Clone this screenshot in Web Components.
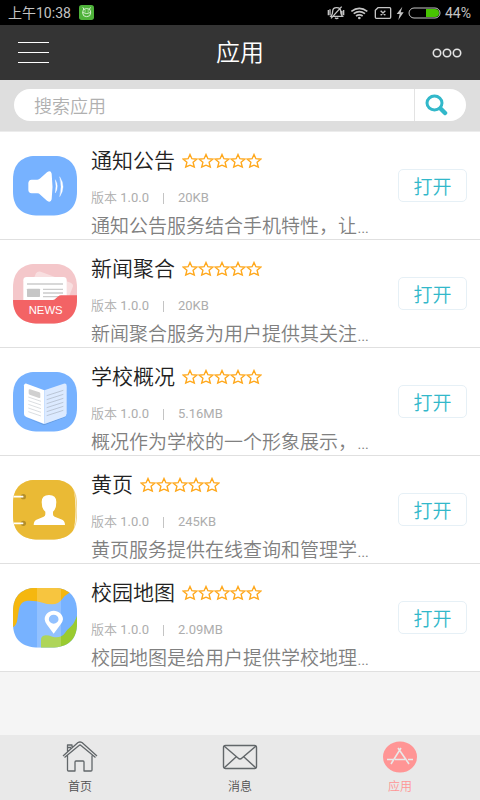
<!DOCTYPE html>
<html lang="zh-CN">
<head>
<meta charset="utf-8">
<meta name="viewport" content="width=device-width, initial-scale=1">
<title>应用</title>
<style>
body {
    --accent: #32b8ca;
    --active: #ff9595;
    --line: #e0e0e0;
    margin: 0;
    min-height: 100vh;
    display: flex;
    flex-direction: column;
    background: #f5f5f5;
    font-family: Roboto, "Noto Sans CJK SC", sans-serif;
    font-weight: 350;
}
main {
    flex: 1;
}
</style>
</head>
<body>

<status-bar time="上午10:38" battery="44%"></status-bar>
<app-header>应用</app-header>
<search-box placeholder="搜索应用"></search-box>

<main>
    <app-item name="通知公告" version="1.0.0" size="20KB">
        <svg slot="icon" viewBox="0 0 192 180" aria-hidden="true">
            <path fill="#77b2ff" d="M0 0h192v180H0z"/>
            <path fill="#fff" d="M46 82q0-10 10-11h17q5 0 9-4l20-18q11-8 14 4 5 38 0 77-3 12-14 4l-20-18q-4-4-9-4H56q-10-1-10-11z"/>
            <path fill="#fff" d="M127 71q12 20 0 40 4-20 0-40zM140 62q20 30 0 60 8-30 0-60z" stroke="#fff" stroke-width="1"/>
        </svg>
        通知公告服务结合手机特性，让…
    </app-item>
    <app-item name="新闻聚合" version="1.0.0" size="20KB">
        <svg slot="icon" viewBox="0 0 192 180" aria-hidden="true">
            <path fill="#f4c7ca" d="M0 0h192v180H0z"/>
            <path fill="#f8dfe0" d="M62 44l7-16q5-8 14-5l90 33q10 5 6 14l-19 48H90z"/>
            <path fill="#fff" d="M31 110V49q0-10 10-10h110q10 0 10 10v61z"/>
            <path stroke="#ccc" stroke-width="4" d="M42 60h108M90 76h60M90 87h60M90 98h50"/>
            <rect x="42" y="74" width="39" height="25" rx="2" fill="#c6c6c6"/>
            <path fill="#f36365" d="M0 108h120q5 0 9-5l7-6q3-3 8-3h48v86H0z"/>
            <text x="47" y="150" fill="#fff" font-family="Liberation Sans, sans-serif" font-size="34">NEWS</text>
        </svg>
        新闻聚合服务为用户提供其关注…
    </app-item>
    <app-item name="学校概况" version="1.0.0" size="5.16MB">
        <svg slot="icon" viewBox="0 0 192 180" aria-hidden="true">
            <path fill="#77b2ff" d="M0 0h192v180H0z"/>
            <path fill="#659bdf" d="M35 136l58 21 65-24-2 3-63 24z"/>
            <path fill="#fff" d="M33 40q1-7 8-5l53 20v101l-54-21q-7-3-7-9z"/>
            <path fill="#dceaff" d="M94 55l58-20q9-2 9 7v82q0 8-8 11l-59 21z"/>
            <path fill="#d0d0d0" d="M47 54q0-3 4-2l28 9q3 1 3 4v11q0 3-4 2l-28-10q-3-1-3-4z"/>
            <path fill="none" stroke="#c9cdd2" stroke-width="2" d="M46 75l38 13M46 86l38 13M46 97l38 13M46 108l38 13M46 119l38 13"/>
            <path fill="none" stroke="#a9b3c1" stroke-width="2" d="M101 71l50-16M101 83l50-16M101 95l50-16M101 107l50-16M101 119l50-16M101 131l50-16"/>
        </svg>
        概况作为学校的一个形象展示，…
    </app-item>
    <app-item name="黄页" version="1.0.0" size="245KB">
        <svg slot="icon" viewBox="0 0 192 180" aria-hidden="true">
            <path fill="#f0d48a" d="M0 0h192v180H0z"/>
            <path fill="none" stroke="#fff" stroke-width="2" d="M150 3q38 8 39 87t-39 87"/>
            <path fill="#eaba35" d="M0 0h140q32 4 41 28 6 20 6 62t-6 62q-9 24-41 28H0z"/>
            <circle cx="31" cy="50" r="8" fill="#b48e28"/>
            <circle cx="31" cy="130" r="8" fill="#b48e28"/>
            <path stroke="#fff" stroke-width="5" stroke-linecap="round" d="M0 50h29M0 130h29"/>
            <path fill="#fff" d="M86 66q0-21 22-21t22 21q0 21-10 29v8q0 5 5 7l19 8q12 4 12 17H62q0-13 12-17l18-8q5-2 5-7v-8q-11-8-11-29z"/>
        </svg>
        黄页服务提供在线查询和管理学…
    </app-item>
    <app-item name="校园地图" version="1.0.0" size="2.09MB">
        <svg slot="icon" viewBox="0 0 192 180" aria-hidden="true">
            <path fill="#77b2ff" d="M0 0h192v180H0z"/>
            <path fill="#f5b70f" d="M0 0h192q-8 4-23 14-13 7-22 20-10 15-30 15-16 0-28-5-18-7-46-6-20 1-25 25-3 18-5 32-2 16-13 23z"/>
            <path fill="#9acb30" d="M84 180v-22q-1-15 14-16 10 0 20 4 24 7 38-11 8-12 16-18 12-10 20-34v97z"/>
            <path fill="#fff" fill-opacity=".2" d="M72 0h72v180H72z"/>
            <path fill="#fff" fill-rule="evenodd" d="M122 137l-20-27q-7-10-7-16c0-15 12-26 27-26s28 11 28 26q0 6-8 16zM122 80a14 13 0 1 0 0 27 14 13 0 1 0 0-27z"/>
        </svg>
        校园地图是给用户提供学校地理…
    </app-item>
</main>

<tab-bar>
    <tab-item label="首页">
        <svg width="36" height="32" viewBox="0 0 36 32" fill="none" stroke="#62676a" stroke-width="1.300" stroke-linejoin="round" aria-hidden="true">
            <path d="M1 15L16 1.500q2-1 4 0L35 15M2.500 16.500L17 4.500q1-1 2 0l14.500 12M5.500 14.500V29q0 1 1 1H13v-9q0-1 1-1h7q1 0 1 1v9h7q1 0 1-1V14.500M5.500 11V4h4.500v3M5.500 6.500H9"/>
        </svg>
    </tab-item>
    <tab-item label="消息">
        <svg width="36" height="32" viewBox="0 0 36 32" fill="none" stroke="#62676a" stroke-width="1.400" aria-hidden="true">
            <rect x="1.500" y="4.500" width="33" height="23" rx="2"/>
            <path d="M2 5l14 12q2 2 4 0L34 5M2 27l12-11M34 27L22 16"/>
        </svg>
    </tab-item>
    <tab-item label="应用" active>
        <svg width="36" height="32" viewBox="0 0 36 32" fill="none" stroke="#e9e9e9" stroke-width="1.600" aria-hidden="true">
            <ellipse cx="18" cy="16" rx="17" ry="15.500" fill="#ff9595" stroke="none"/>
            <path d="M5 18.500h6M13 18.500h10M26 18.500h5M9 23l10-16M16 7l11 16"/>
        </svg>
    </tab-item>
</tab-bar>

<script>
function makeTemplate(html) {
    const template = document.createElement('template');
    template.innerHTML = html;
    return template;
}

class BaseElement extends HTMLElement {
    constructor() {
        super();
        this.attachShadow({ mode: "open" });
        this.shadowRoot.appendChild(this.constructor.template.content.cloneNode(true));
    }

    // copies attribute values into the elements marked with data-text
    connectedCallback() {
        this.shadowRoot.querySelectorAll('[data-text]').forEach(el => {
            el.textContent = this.getAttribute(el.dataset.text);
        });
    }
}

class StatusBar extends BaseElement {
    static template = makeTemplate(`
<style>
:host {
    display: flex;
    align-items: center;
    justify-content: space-between;
    height: 25px;
    padding: 0 9px 0 8px;
    background: #000;
    color: #c4c4c4;
    font-size: 14px;
    font-weight: 400;
    line-height: 26px;
}
div {
    display: flex;
    align-items: center;
    gap: 8px;
}
.right {
    gap: 4px;
}
svg {
    display: block;
}
</style>

<div>
    <span data-text="time"></span>
    <svg width="15" height="15" viewBox="0 0 45 45">
        <rect width="45" height="45" rx="8" fill="#4eb23a"/>
        <g fill="none" stroke="#d5f0cf" stroke-width="3" stroke-linecap="round">
            <path d="M14 13q9-5 18 0 3 4 3 11 0 11-12 11T11 24q0-7 3-11zM12 8l3 5M34 8l-3 5M12 23q11 6 22 0M18 18h1M27 18h1"/>
        </g>
    </svg>
</div>
<div class="right">
    <svg width="77" height="18" viewBox="0 0 231 54" fill="none" stroke="#c4c4c4" stroke-width="4">
        <path d="M12 37q5-5 5-15 0-11 12-11t12 11q0 10 5 15zM24 41q5 5 10 0M44 8L12 43M4 18v16M9 16v18M50 18v16M45 20v15"/>
        <g stroke-width="5">
            <path d="M73 22q24-18 48 0M80 29q17-12 34 0M87 36q10-7 20 0"/>
        </g>
        <circle cx="97" cy="42" r="4" fill="#c4c4c4" stroke="none"/>
        <path d="M153 11h35q3 0 3 3v26q0 3-3 3h-40q-3 0-3-3V19zM161 20l14 14M175 20l-14 14"/>
        <path d="M226 8l-17 22h9l-4 18 16-23h-9z" fill="#c4c4c4" stroke="none"/>
    </svg>
    <svg width="33" height="12" viewBox="0 0 33 12">
        <rect x="1" y="1" width="31" height="10" rx="5" fill="none" stroke="#c4c4c4"/>
        <path d="M18 2h9q4 0 4 4t-4 4h-9z" fill="#47c400"/>
    </svg>
    <span data-text="battery"></span>
</div>`);
}
window.customElements.define('status-bar', StatusBar);

class AppHeader extends BaseElement {
    static template = makeTemplate(`
<style>
:host {
    display: grid;
    grid-template-columns: 1fr auto 1fr;
    align-items: center;
    height: 55px;
    padding: 0 18px;
    background: #343434;
    color: #fff;
}
h1 {
    margin: 0;
    font-size: 24px;
    font-weight: inherit;
    line-height: 34px;
}
button {
    display: flex;
    padding: 0;
    border: none;
    background: none;
}
.more {
    justify-self: end;
}
</style>

<button type="button" aria-label="菜单">
    <svg width="31" height="22" viewBox="0 0 31 22" stroke="#fff">
        <path d="M0 .5h31M0 10.500h31M0 20.500h31"/>
    </svg>
</button>
<h1><slot></slot></h1>
<button class="more" type="button" aria-label="更多">
    <svg width="30" height="10" viewBox="0 0 30 10" fill="none" stroke="#e4e4e4" stroke-width="1.600">
        <circle cx="5" cy="5" r="3.700"/>
        <circle cx="15" cy="5" r="3.700"/>
        <circle cx="25" cy="5" r="3.700"/>
    </svg>
</button>`);
}
window.customElements.define('app-header', AppHeader);

class SearchBox extends BaseElement {
    static template = makeTemplate(`
<style>
:host {
    display: block;
    padding: 9px 14px 10px;
    border-bottom: 1px solid #ececec;
    background: #dedede;
}
form {
    display: flex;
    height: 32px;
    overflow: hidden;
    border-radius: 16px;
    background: #fff;
}
input {
    flex: 1;
    min-width: 0;
    padding: 2px 20px 0;
    border: none;
    border-right: 1px solid #e3e3e3;
    outline: none;
    background: none;
    color: #333;
    font: inherit;
    font-size: 18px;
}
input::placeholder {
    color: #b0b0b0;
}
button {
    width: 51px;
    padding: 0 0 0 9px;
    border: none;
    background: none;
}
svg {
    display: block;
}
</style>

<form role="search">
    <input type="text" aria-label="搜索应用">
    <button type="button" aria-label="搜索">
        <svg width="24" height="22" viewBox="0 0 24 22" fill="none" stroke="#32b8ca">
            <ellipse cx="10.500" cy="9" rx="7.500" ry="7" stroke-width="3"/>
            <path stroke-width="4.500" stroke-linecap="round" d="M17 15l4 4"/>
        </svg>
    </button>
</form>`);

    connectedCallback() {
        this.shadowRoot.querySelector('input').placeholder = this.getAttribute('placeholder');
    }
}
window.customElements.define('search-box', SearchBox);

class StarRating extends BaseElement {
    static template = makeTemplate(`
<style>
:host {
    display: flex;
}
</style>`);

    connectedCallback() {
        const star = '<svg width="16" height="16" viewBox="0 0 16 16" fill="none" stroke="#ffa81c" stroke-width="1.400" aria-hidden="true"><path d="M8 1.500l1.900 4.200 4.900.5-3.700 3.100 1.200 4.700L8 12.200 3.700 14l1.200-4.700-3.700-3.100 4.900-.5z"/></svg>';
        this.shadowRoot.innerHTML += star.repeat(5);
    }
}
window.customElements.define('star-rating', StarRating);

class AppItem extends BaseElement {
    static template = makeTemplate(`
<style>
:host {
    display: flex;
    align-items: center;
    height: 107px;
    padding: 0 13px;
    border-bottom: 1px solid var(--line);
    background: #fff;
}
.icon {
    flex: none;
    width: 64px;
    height: 60px;
    margin-right: 14px;
    clip-path: path("M0 24C0 8 9 0 26 0H38C55 0 64 8 64 24V36C64 52 55 60 38 60H26C9 60 0 52 0 36Z");
}
::slotted(svg) {
    display: block;
    width: 64px;
    height: 60px;
}
.info {
    flex: 1;
    min-width: 0;
    padding-top: 15px;
}
.title {
    display: flex;
    align-items: center;
    gap: 7px;
}
h2 {
    margin: 0;
    color: #222;
    font-size: 21px;
    font-weight: inherit;
    line-height: 28px;
}
.meta {
    display: flex;
    align-items: center;
    gap: 14px;
    margin: 13px 0 7px;
    color: #adadad;
    font-size: 13px;
    line-height: 20px;
}
.meta [data-text] {
    font-weight: 400;
}
.meta i {
    width: 1px;
    height: 11px;
    background: #c4c4c4;
}
p {
    margin: 0;
    color: #808080;
    font-size: 19px;
    line-height: 24px;
    white-space: nowrap;
}
button {
    flex: none;
    width: 69px;
    height: 33px;
    padding: 0;
    border: 1px solid #e6f0f6;
    border-radius: 5px;
    background: #fff;
    color: var(--accent);
    font: inherit;
    font-size: 19px;
}
</style>

<div class="icon"><slot name="icon"></slot></div>
<div class="info">
    <div class="title">
        <h2 data-text="name"></h2>
        <star-rating></star-rating>
    </div>
    <div class="meta">
        <span>版本 <span data-text="version"></span></span>
        <i></i>
        <span data-text="size"></span>
    </div>
    <p><slot></slot></p>
</div>
<button type="button">打开</button>`);
}
window.customElements.define('app-item', AppItem);

class TabItem extends BaseElement {
    static template = makeTemplate(`
<style>
:host {
    flex: 1;
    color: #505050;
}
:host([active]) {
    color: var(--active);
}
a {
    display: flex;
    flex-direction: column;
    align-items: center;
    gap: 6px;
    padding: 6px 0 5px;
    color: inherit;
    font-size: 12px;
    line-height: 16px;
    text-decoration: none;
}
::slotted(svg) {
    display: block;
}
</style>

<a href="#">
    <slot></slot>
    <span data-text="label"></span>
</a>`);
}
window.customElements.define('tab-item', TabItem);

class TabBar extends BaseElement {
    static template = makeTemplate(`
<style>
:host {
    display: block;
    background: #e9e9e9;
}
nav {
    display: flex;
}
</style>

<nav><slot></slot></nav>`);
}
window.customElements.define('tab-bar', TabBar);
</script>
</body>
</html>
